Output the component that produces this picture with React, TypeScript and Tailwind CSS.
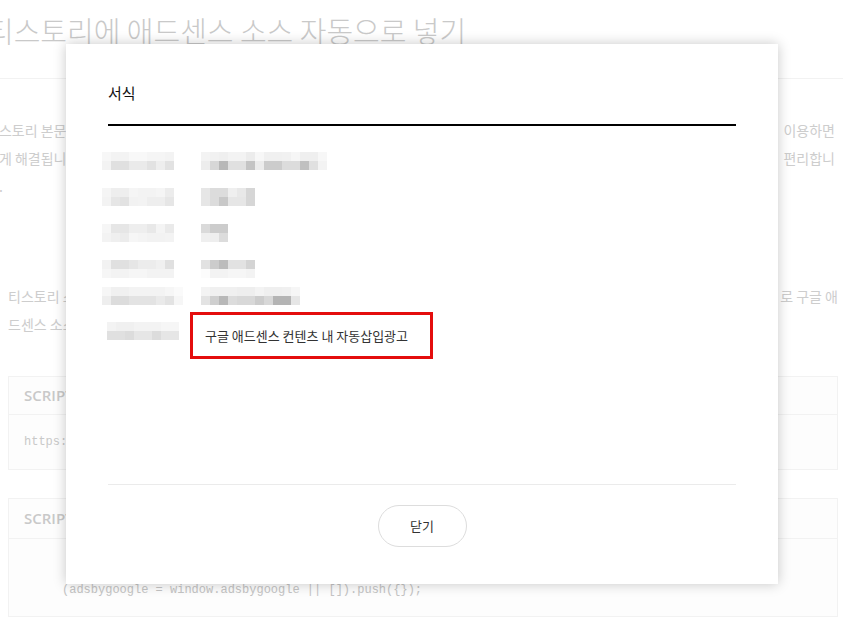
import React from "react";

const KR = "font-['Noto_Sans_CJK_KR','Noto_Sans',sans-serif]";

type Cells = string[][];

function Mosaic({ cells, className = "" }: { cells: Cells; className?: string }) {
  return (
    <div className={"flex flex-col " + className}>
      {cells.map((row, i) => (
        <div key={i} className="flex">
          {row.map((c, j) => (
            <div key={j} className="w-[9px] h-[9px]" style={{ backgroundColor: "#" + c }} />
          ))}
        </div>
      ))}
    </div>
  );
}

const rowOf = (s: string) => s.split(" ").map((v) => v + v + v);

const rows: { left: Cells; right: Cells }[] = [
  {
    left: [rowOf("f7 f3 f3 f8 f8 f5 f5 f3"), rowOf("f3 e0 e0 ea ea e2 ee e2")],
    right: [
      rowOf("f3 f1 ef f3 f3 ec f7 f0 f0 f1 f6 ef ef f7"),
      rowOf("ed d7 b8 e0 e0 c4 ec cc cc dc dc c0 e0 f3"),
    ],
  },
  {
    left: [rowOf("f5 ee ee f5 f3 f3 f5 ec"), rowOf("f3 e6 e2 f2 f3 ee ee e6")],
    right: [rowOf("e6 dc dc ef e8 d6"), rowOf("e6 dc c8 e6 e6 d6")],
  },
  {
    left: [rowOf("f6 e6 e6 ee ee e8 f4 ea"), rowOf("f3 ef ec f6 f4 f2 f2 f3")],
    right: [rowOf("da cc cc"), rowOf("ef ee dc")],
  },
  {
    left: [rowOf("f2 e0 e0 e6 ec ec f0 e0"), rowOf("f6 f3 f3 f6 f6 f3 f3 f3")],
    right: [rowOf("e2 cc bc e2 e2 d4"), rowOf("fc f3 f3 f6 f6 f3")],
  },
  {
    left: [rowOf("f6 f0 f0 f3 f3 f3 f3 f6 fa"), rowOf("ee dc dc e3 e3 e3 ea e3 f6")],
    right: [
      rowOf("f3 f0 f0 f0 ee ee f3 ef ef f0 f6"),
      rowOf("e3 cf b8 dc d8 d8 cc d8 b4 b4 e6"),
    ],
  },
];

const row6Left: Cells = [rowOf("f3 f0 f0 f3 f3 f3 f6 f6"), rowOf("e0 e0 dc e6 e6 dc e6 e6")];

export default function App() {
  return (
    <div className={"relative w-[843px] h-[622px] overflow-hidden bg-white " + KR}>
      {/* background page */}
      <div className="flex flex-col">
        <div className="h-[79px] border-b border-[#f2f2f2] flex items-start">
          <h1 className="ml-[-13px] mt-[10px] text-[29px] leading-[40px] font-light text-[#c9c9c9] whitespace-nowrap">
            티스토리에 애드센스 소스 자동으로 넣기
          </h1>
        </div>

        <div className="mt-[37px] ml-[-14px] mr-[8px] text-[14px] leading-[28px] text-[#cdcdcd] whitespace-nowrap">
          <div className="flex justify-between">
            <span>티스토리 본문에 광고를</span>
            <span>이용하면</span>
          </div>
          <div className="flex justify-between">
            <span>쉽게 해결됩니다</span>
            <span>편리합니</span>
          </div>
          <div>다.</div>
        </div>

        <div className="mt-[82px] ml-[8px] mr-[5px] text-[14px] leading-[28px] text-[#cdcdcd] whitespace-nowrap">
          <div className="flex justify-between">
            <span>티스토리 스킨 편집</span>
            <span>로 구글 애</span>
          </div>
          <div>드센스 소스를</div>
        </div>

        <div className="mt-[38px] mr-[5px] ml-[8px] border border-[#f2f2f2] bg-[#fdfdfd]">
          <div className="h-[38px] flex items-center px-[15px] border-b border-[#f2f2f2] font-['Open_Sans',sans-serif] font-semibold text-[15px] text-[#c9c9c9]">
            SCRIPT URL
          </div>
          <div className="h-[54px] flex items-center px-[15px] font-['Liberation_Mono',monospace] text-[12px] text-[#c9c9c9] whitespace-nowrap">
            https://pagead2.googlesyndication.com/pagead/js
          </div>
        </div>

        <div className="mt-[28px] mr-[5px] ml-[8px] border border-[#f2f2f2] bg-[#fdfdfd]">
          <div className="h-[40px] flex items-center px-[15px] border-b border-[#f2f2f2] font-['Open_Sans',sans-serif] font-semibold text-[15px] text-[#c9c9c9]">
            SCRIPT
          </div>
          <div className="pt-[18px] pb-[15px] pl-[53px] font-['Liberation_Mono',monospace] text-[12px] leading-[22px] text-[#c4c4c4] whitespace-pre">
            <div className="pl-[40px]">{"<ins class=\"adsbygoogle\"></ins>"}</div>
            <div>{"(adsbygoogle = window.adsbygoogle || []).push({});"}</div>
          </div>
        </div>
      </div>

      {/* modal */}
      <div className="absolute left-[66px] top-[44px] w-[712px] h-[540px] bg-white shadow-[0_0_12px_rgba(0,0,0,0.22)] px-[42px] flex flex-col">
        <div className="pt-[38px] text-[15px] leading-[22px] text-[#111]">서식</div>
        <div className="mt-[20px] h-[2px] bg-black" />

        <div className="flex flex-col">
          {rows.map((r, i) => (
            <div
              key={i}
              className={
                "flex items-start ml-[-6px] " + (i === 0 ? "mt-[26px]" : i === 4 ? "mt-[9px]" : "mt-[18px]")
              }
            >
              <div className="w-[99px]">
                <Mosaic cells={r.left} />
              </div>
              <Mosaic cells={r.right} />
            </div>
          ))}

          <div className="flex items-start mt-[7px]">
            <Mosaic cells={row6Left} className="mt-[10px] ml-[-1px]" />
            <div className="ml-[11px] w-[243px] h-[47px] border-[3px] border-[#e40d0d] flex items-center pl-[12px] text-[13px] text-[#333] whitespace-nowrap">
              구글 애드센스 컨텐츠 내 자동삽입광고
            </div>
          </div>
        </div>

        <div className="mt-[125px] h-px bg-[#ebebeb]" />

        <div className="mt-[20px] flex justify-center">
          <button className="w-[89px] h-[42px] rounded-full border border-[#dddddd] bg-white text-[13px] text-[#333]">
            닫기
          </button>
        </div>
      </div>
    </div>
  );
}
